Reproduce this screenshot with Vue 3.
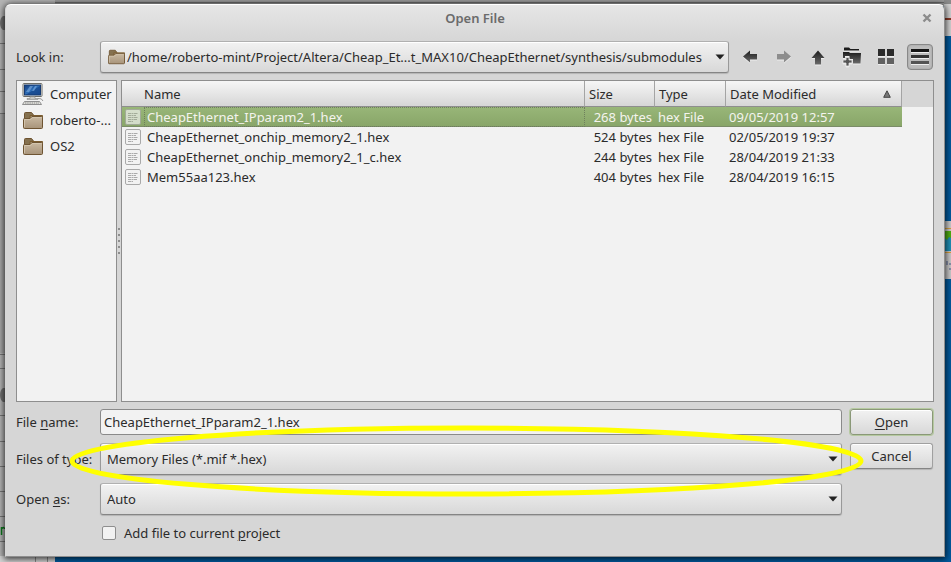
<script setup>
import { ref } from 'vue'

const places = [
  { name: 'Computer', icon: 'computer' },
  { name: 'roberto-...', icon: 'folder' },
  { name: 'OS2', icon: 'folder' },
]
const files = [
  { name: 'CheapEthernet_IPparam2_1.hex', size: '268 bytes', type: 'hex File', date: '09/05/2019 12:57' },
  { name: 'CheapEthernet_onchip_memory2_1.hex', size: '524 bytes', type: 'hex File', date: '02/05/2019 19:37' },
  { name: 'CheapEthernet_onchip_memory2_1_c.hex', size: '244 bytes', type: 'hex File', date: '28/04/2019 21:33' },
  { name: 'Mem55aa123.hex', size: '404 bytes', type: 'hex File', date: '28/04/2019 16:15' },
]
const selected = ref(0)
const fileName = ref(files[0].name)
const addToProject = ref(false)

function pick(i) {
  selected.value = i
  fileName.value = files[i].name
}
</script>

<template>
  <div class="desktop">
    <svg width="0" height="0" class="defs" aria-hidden="true">
      <defs>
        <linearGradient id="dark" x1="0" y1="0" x2="0" y2="1">
          <stop offset="0" stop-color="#1c1c1c" />
          <stop offset="1" stop-color="#6a6a6a" />
        </linearGradient>
        <linearGradient id="tan" x1="0" y1="0" x2="0" y2="1">
          <stop offset="0" stop-color="#c9b9a2" />
          <stop offset="1" stop-color="#a8947a" />
        </linearGradient>
        <linearGradient id="screen" x1="0" y1="0" x2="1" y2="1">
          <stop offset="0" stop-color="#123d80" />
          <stop offset="0.5" stop-color="#2f6fb8" />
          <stop offset="0.55" stop-color="#1c5096" />
          <stop offset="1" stop-color="#18488e" />
        </linearGradient>
        <symbol id="folder" viewBox="0 0 20 19">
          <path d="M1.500 17V2.500Q1.500 1.500 2.500 1.500H8.500L10.500 4V8H1.500Z" fill="#85714f" stroke="#6e5330" />
          <path d="M7 4.500H19.500V16H7Z" fill="#a39072" stroke="#7a5c30" />
          <path d="M.5 8.500Q.5 7.500 1.500 7.500H7L9 5.500H18.500Q19.500 5.500 19.500 6.500V16.500Q19.500 17.500 18.500 17.500H1.500Q.5 17.500 .5 16.500Z" fill="url(#tan)" stroke="#6e5432" />
          <path d="M1.500 16V8.500H7.500L9.500 6.500H18.500" fill="none" stroke="#d7c9b1" stroke-width=".8" />
        </symbol>
        <symbol id="computer" viewBox="0 0 22 22">
          <rect x="1" y=".5" width="19" height="13" rx="1" fill="#eeeeea" stroke="#6d6d68" />
          <rect x="2.500" y="2" width="16" height="10" fill="url(#screen)" stroke="#173a70" />
          <path d="M4 9L8 3H11L7 9ZM10 8L13 3H15L12 8Z" fill="#82b1e2" opacity=".6" />
          <path d="M8 13.500H13V15.500H16V16.500H5V15.500H8Z" fill="#c8c8c4" stroke="#777" stroke-width=".5" />
          <path d="M2.500 18.500H17.500L19.500 21.500H.5Z" fill="#e5e5e0" stroke="#777" stroke-width=".8" />
          <path d="M3 20H17" stroke="#888" stroke-dasharray="1.500 .7" />
          <path d="M16 15.500Q20 15 21 18" fill="none" stroke="#999" />
        </symbol>
        <symbol id="doc" viewBox="0 0 16 16">
          <rect x=".5" y=".5" width="15" height="15" rx="1.500" fill="#f2f2f2" stroke="#a9a9a9" />
          <path d="M3 4.500H13M3 6.500H11M3 8.500H13M3 10.500H12M3 12.500H8" stroke="#aaa" stroke-dasharray="3 .5 2 .5" />
        </symbol>
      </defs>
    </svg>

    <svg class="window-behind" aria-hidden="true">
      <rect width="55" height="100%" fill="#b4b4b4" />
      <rect y="113" width="55" height="240" fill="#a6a6a6" />
      <path d="M0 43.500H55M0 69.500H55M0 91.500H55M0 113.500H55M0 354.500H55M0 368.500H55M0 415.500H55M0 441.500H55M0 466.500H55M0 491.500H55M0 516.500H55M0 541.500H55" stroke="#777" />
      <path d="M5 16H3Q0 18 0 23T3 30H5ZM5 388H3Q0 390 0 395T3 402H5Z" fill="#6f6f6f" />
      <path d="M1.500 535V527M1.500 529Q4 526 4.500 529" stroke="#0b7a1c" stroke-width="1.500" fill="none" />
      <rect y="556" width="55" height="6" fill="#d2d2d2" />
      <path d="M35.500 556V562M47.500 556V562" stroke="#888" />
    </svg>
    <div class="window-side"></div>
    <svg class="desk-icon" viewBox="0 0 7 58" aria-hidden="true">
      <rect width="7" height="58" fill="#c9c9c9" />
      <path d="M0 7.500H7M0 31.500H7" stroke="#d9a23c" />
      <rect y="10" width="7" height="20" fill="#1f8fb5" />
      <path d="M0 10H7V17L5 16L3 19L0 16Z" fill="#4fae12" />
      <path d="M0 43H1M3 40V44M5 43H7M0 48H1M5 48H7" stroke="#4a5a8a" />
    </svg>

    <main class="dialog">
      <header class="titlebar">
        <h1>Open File</h1>
        <button class="close" aria-label="Close">
          <svg width="10" height="10" viewBox="0 0 10 10"><path d="M1.500 1.500L8.500 8.500M8.500 1.500L1.500 8.500" stroke="#8c8c8c" stroke-width="2.400" /></svg>
        </button>
      </header>

      <div class="location">
        <label for="look">Look in:</label>
        <div class="combo with-icon">
          <svg class="combo-icon" width="17" height="16"><use href="#folder" /></svg>
          <select id="look">
            <option>/home/roberto-mint/Project/Altera/Cheap_Et...t_MAX10/CheapEthernet/synthesis/submodules</option>
          </select>
          <svg class="arrow" width="10" height="6" viewBox="0 0 10 6"><path d="M.5 .5H9.500L5 5.500Z" fill="#222" /></svg>
        </div>
        <nav class="tools">
          <button aria-label="Back">
            <svg width="20" height="20" viewBox="0 0 20 20"><path d="M3 9.500L10 3.500V7H17V12.500H10V15.500Z" fill="url(#dark)" /></svg>
          </button>
          <button aria-label="Forward" disabled>
            <svg width="20" height="20" viewBox="0 0 20 20"><path d="M17 9.500L10 3.500V7H3V12.500H10V15.500Z" fill="#8d8d8d" /></svg>
          </button>
          <button aria-label="Parent directory">
            <svg width="20" height="20" viewBox="0 0 20 20"><path d="M10 3.500L16.500 11H13V17.500H7V11H3.500Z" fill="url(#dark)" /></svg>
          </button>
          <button aria-label="New folder">
            <svg width="20" height="20" viewBox="0 0 20 20">
              <path d="M2 3.500V1Q2 .5 2.500 .5H7L8.500 2H17V3.500Z" fill="#1c1c1c" />
              <path d="M1 5H7L8 6H19L18.500 16.500H11V12H7.500V9H3V11H1Z" fill="url(#dark)" />
              <path d="M4 10.500H7V13H10V16H7V19H4V16H1V13H4Z" fill="#555" stroke="#e4e4e4" stroke-width=".8" />
            </svg>
          </button>
          <button aria-label="List view">
            <svg width="20" height="20" viewBox="0 0 20 20"><path d="M2 2H9V9H2ZM11 2H18V9H11Z" fill="#2b2b2b" /><path d="M2 11H9V17H2ZM11 11H18V17H11Z" fill="#616161" /></svg>
          </button>
          <button aria-label="Detail view" aria-pressed="true" class="pressed">
            <svg width="20" height="20" viewBox="0 0 20 20"><path d="M1 3.500H19" stroke="#151515" stroke-width="3" /><path d="M1 9.500H19" stroke="#333" stroke-width="3" /><path d="M1 15.500H19" stroke="#555" stroke-width="3" /></svg>
          </button>
        </nav>
      </div>

      <div class="browser">
        <ul class="places">
          <li v-for="p in places" :key="p.name">
            <svg width="22" height="22" v-if="p.icon === 'computer'"><use href="#computer" /></svg>
            <svg width="22" height="19" v-else><use href="#folder" /></svg>
            <span>{{ p.name }}</span>
          </li>
        </ul>
        <div class="splitter"><i v-for="n in 5" :key="n"></i></div>
        <div class="files">
          <table>
            <colgroup><col /><col class="c-size" /><col class="c-type" /><col class="c-date" /><col class="c-rest" /></colgroup>
            <thead>
              <tr>
                <th class="name">Name</th>
                <th>Size</th>
                <th>Type</th>
                <th><span class="sorted">Date Modified
                  <svg width="8" height="8" viewBox="0 0 8 8"><path d="M4 .8L7.300 7.300H.7Z" fill="#777" stroke="#444" /></svg></span></th>
                <td class="rest"></td>
              </tr>
            </thead>
            <tbody>
              <tr v-for="(f, i) in files" :key="f.name" :class="{ selected: i === selected }" @click="pick(i)">
                <td class="file"><div><svg width="16" height="16"><use href="#doc" /></svg><span>{{ f.name }}</span></div></td>
                <td class="size">{{ f.size }}</td>
                <td>{{ f.type }}</td>
                <td>{{ f.date }}</td>
                <td class="rest"></td>
              </tr>
            </tbody>
          </table>
        </div>
      </div>

      <form class="form" @submit.prevent>
        <label for="fname">File <u>n</u>ame:</label>
        <input id="fname" v-model="fileName" type="text" class="field" />
        <button class="push default" type="submit"><span><u>O</u>pen</span></button>

        <label for="ftype">Files of type:</label>
        <div class="combo">
          <select id="ftype"><option>Memory Files (*.mif *.hex)</option></select>
          <svg class="arrow" width="10" height="6" viewBox="0 0 10 6"><path d="M.5 .5H9.500L5 5.500Z" fill="#222" /></svg>
        </div>
        <button class="push" type="button">Cancel</button>

        <label for="openas">Open <u>a</u>s:</label>
        <div class="combo">
          <select id="openas"><option>Auto</option></select>
          <svg class="arrow" width="10" height="6" viewBox="0 0 10 6"><path d="M.5 .5H9.500L5 5.500Z" fill="#222" /></svg>
        </div>

        <label class="check"><input v-model="addToProject" type="checkbox" /><span>Add file to current <u>p</u>roject</span></label>

        <svg class="highlight" aria-hidden="true"><ellipse cx="50%" cy="50%" /></svg>
      </form>
    </main>
  </div>
</template>

<style>
body {
  background: #005a9e;
}
</style>

<style scoped>
.desktop {
  position: relative;
  box-sizing: border-box;
  min-height: 100vh;
  padding: 4px 6px 5px 5px;
  overflow: hidden;
  display: flex;
  font: 13px/20px "Noto Sans", sans-serif;
  color: #2b2b2b;
  background: linear-gradient(#9a9a9a 0 2px, #6e6e6e 2px 3px, #a0a0a0 3px 6px, transparent 6px);
}
.defs {
  position: absolute;
}
.window-behind {
  position: absolute;
  left: 0;
  top: 3px;
  margin-top: -3px;
  width: 55px;
  height: 100%;
}
.window-side {
  position: absolute;
  right: 0;
  top: 0;
  width: 7px;
  height: 36px;
  background: linear-gradient(#8a8a8a 0 4px, #d0d0d0 4px 18px, #8a3a28 18px 20px, #d0d0d0 20px);
}
.desk-icon {
  position: absolute;
  right: 0;
  top: 221px;
  width: 7px;
  height: 58px;
}
.dialog {
  position: relative;
  flex: 1;
  min-width: 0;
  box-sizing: border-box;
  display: flex;
  flex-direction: column;
  padding: 0 10px 0 10px;
  border: 1px solid #8e8e8e;
  border-top-color: #fff;
  border-left-color: #d6d6d6;
  border-radius: 6px 6px 0 0;
  background: linear-gradient(#e6e6e6, #d6d6d6 36px);
  box-shadow: 0 1px 6px 1px rgba(0, 0, 0, 0.75);
}
.titlebar {
  display: grid;
  grid-template-columns: 1fr auto 1fr;
  align-items: center;
  height: 26px;
}
h1 {
  grid-column: 2;
  margin: 0;
  font-size: 13px;
  font-weight: 600;
  color: #6b6b6b;
}
button {
  font: inherit;
  color: inherit;
  padding: 0;
}
.close {
  justify-self: end;
  display: grid;
  place-items: center;
  width: 14px;
  height: 20px;
  border: 0;
  background: none;
}
.location {
  display: grid;
  grid-template-columns: 76px minmax(0, 1fr) auto;
  column-gap: 8px;
  align-items: center;
  margin-top: 10px;
}
.combo {
  position: relative;
  display: grid;
}
.combo-icon {
  position: absolute;
  left: 8px;
  top: 8px;
  pointer-events: none;
}
.arrow {
  position: absolute;
  right: 4px;
  top: 13px;
  pointer-events: none;
}
select {
  appearance: none;
  box-sizing: border-box;
  width: 100%;
  height: 32px;
  padding: 0 20px 0 6px;
  border: 1px solid #999;
  border-top-color: #b0b0b0;
  border-bottom-color: #858585;
  border-radius: 3px;
  background: linear-gradient(#f2f2f2, #d8d8d8);
  box-shadow: inset 0 1px #fff, 0 1px 1px #b4b4b4;
  font: inherit;
  color: inherit;
}
.with-icon select {
  padding-left: 26px;
}
.tools {
  display: flex;
  gap: 8px;
}
.tools button {
  display: grid;
  place-items: center;
  box-sizing: border-box;
  width: 26px;
  height: 26px;
  border: 0;
  border-radius: 4px;
  background: none;
}
.tools button svg {
  filter: drop-shadow(0 1px 0 #eee);
}
.tools .pressed {
  margin: 0 1px 0 0;
  border: 1px solid #888;
  background: #bcbcbc;
  box-shadow: inset 0 0 2px #999;
}
.browser {
  display: flex;
  height: 322px;
  margin-top: 7px;
}
.places,
.files {
  box-sizing: border-box;
  border: 1px solid #8e8e8e;
  background: #f2f2f2;
}
.places {
  width: 101px;
  margin: 0;
  padding: 0;
  list-style: none;
}
.places li {
  display: flex;
  align-items: center;
  gap: 6px;
  height: 26px;
  padding-left: 5px;
}
.splitter {
  width: 4px;
  display: flex;
  flex-direction: column;
  align-items: center;
  justify-content: center;
  gap: 4px;
}
.splitter i {
  width: 2px;
  height: 2px;
  background: #8e8e8e;
}
.files {
  flex: 1;
  min-width: 0;
}
table {
  width: 100%;
  table-layout: fixed;
  border-collapse: separate;
  border-spacing: 0;
}
.c-size {
  width: 70px;
}
.c-type {
  width: 71px;
}
.c-date {
  width: 176px;
}
.c-rest {
  width: 31px;
}
th {
  box-sizing: border-box;
  height: 26px;
  padding: 0 4px;
  text-align: left;
  font-weight: 400;
  border-right: 1px solid #a4a4a4;
  border-bottom: 1px solid #8e8e8e;
  background: linear-gradient(#f6f6f6, #d6d6d6);
}
th.name {
  padding-left: 22px;
}
thead .rest {
  background: #d6d6d6;
}
.sorted {
  display: flex;
  justify-content: space-between;
  align-items: center;
  padding-right: 6px;
}
td {
  height: 20px;
  padding: 0 0 0 3px;
  white-space: nowrap;
}
td.size {
  padding: 0 3px 0 0;
  text-align: right;
}
.file div {
  display: flex;
  align-items: center;
  gap: 6px;
}
.selected td:not(.rest) {
  color: #f4f4ee;
  background: linear-gradient(#98b678, #88a568);
  box-shadow: inset 0 -1px #7b8c68;
}
.selected .file svg {
  opacity: 0.7;
}
.selected .file span {
  flex: 1;
  margin-left: -3px;
  padding-left: 2px;
  box-sizing: border-box;
  height: 20px;
  line-height: 18px;
  border: 1px dotted #6e7f5c;
}
.form {
  position: relative;
  display: grid;
  grid-template-columns: 76px minmax(0, 1fr) 83px;
  column-gap: 8px;
  row-gap: 8px;
  align-items: center;
  margin-top: 7px;
  padding-right: 1px;
}
u {
  text-decoration-thickness: 1px;
  text-underline-offset: 2px;
}
.form > label {
  white-space: nowrap;
}
.field {
  box-sizing: border-box;
  width: 100%;
  height: 26px;
  padding: 0 3px;
  border: 1px solid #8a8a8a;
  border-radius: 3px;
  background: #f2f2f2;
  font: inherit;
  color: inherit;
}
.push {
  align-self: start;
  box-sizing: border-box;
  height: 26px;
  border: 1px solid #a0a0a0;
  border-bottom-color: #858585;
  border-radius: 3px;
  background: linear-gradient(#f2f2f2, #d8d8d8);
  box-shadow: inset 0 1px #fff, 0 1px 1px #b4b4b4;
}
.push.default {
  border-color: #8a9878;
  box-shadow: inset 0 1px #fff, 0 0 0 1px #b5c9a0;
}
.form .check {
  grid-column: 2 / 4;
  display: flex;
  align-items: center;
  gap: 8px;
  padding-left: 2px;
}
.check input {
  appearance: none;
  box-sizing: border-box;
  width: 14px;
  height: 14px;
  margin: 0;
  border: 1px solid #8e8e8e;
  border-radius: 2px;
  background: #f2f2f2;
}
.check input:checked {
  background: #88a568;
}
.highlight {
  position: absolute;
  left: 53px;
  top: 15px;
  width: calc(100% - 123px);
  height: 74px;
  pointer-events: none;
}
.highlight ellipse {
  rx: calc(50% - 3px);
  ry: 33px;
  fill: none;
  stroke: #ff0;
  stroke-width: 5px;
}
</style>
